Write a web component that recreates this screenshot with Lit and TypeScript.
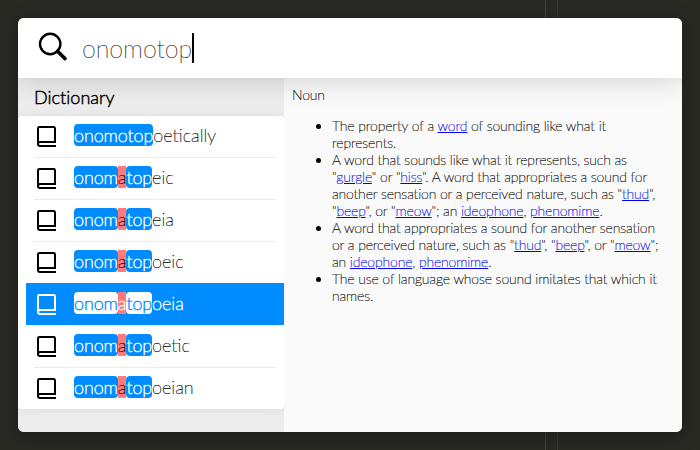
import { LitElement, html, css, svg } from "lit";
import { customElement, property } from "lit/decorators.js";
import { classMap } from "lit/directives/class-map.js";

type Part = { text: string; kind: "match" | "miss" | "rest" };

const fuzzy = (tail: string): Part[] => [
  { text: "onom", kind: "match" },
  { text: "a", kind: "miss" },
  { text: "top", kind: "match" },
  { text: tail, kind: "rest" },
];

const RESULTS: Part[][] = [
  [{ text: "onomotop", kind: "match" }, { text: "oetically", kind: "rest" }],
  fuzzy("eic"),
  fuzzy("eia"),
  fuzzy("oeic"),
  fuzzy("oeia"),
  fuzzy("oetic"),
  fuzzy("oeian"),
];

@customElement("result-row")
export class ResultRow extends LitElement {
  @property({ attribute: false }) parts: Part[] = [];
  @property({ type: Boolean, reflect: true }) selected = false;

  static styles = css`
    :host {
      display: flex;
      align-items: center;
      box-sizing: border-box;
      height: 42px;
      margin: 0 8px 0 16px;
      padding: 0 0 1px 2px;
      border-top: 1px solid #ebebeb;
      font-size: 18px;
      -webkit-text-stroke: 0.2px currentColor;
      color: #000;
    }
    :host(:first-child) {
      height: 41px;
      border-top: none;
    }
    :host([selected]) {
      margin: 0 0 0 8px;
      padding-left: 10px;
      border-top-color: #008cff;
      background: #008cff;
      color: #fff;
      -webkit-text-stroke: 0.5px currentColor;
    }
    .icon {
      width: 20px;
      height: 22px;
      margin: 0 18px 0 0;
      flex: none;
    }
    .word {
      display: flex;
      height: 22px;
      line-height: 23px;
      margin-top: -2px;
    }
    .match {
      background: #008cff;
      color: #fff;
      border-radius: 4px;
      letter-spacing: -0.06px;
      -webkit-text-stroke: 0.5px currentColor;
    }
    .miss {
      background: #ff7a7a;
    }
    :host([selected]) .match {
      background: #fff;
      color: #008cff;
    }
  `;

  render() {
    return html`
      <svg class="icon" viewBox="0 0 20 22" fill="none" stroke="currentColor" stroke-width="2">
        ${svg`<path d="M20 21H4Q2 21 2 19V3.4Q2 2 3.4 2H17.6Q19 2 19 3.4V17H4Q2 17 2 19" />`}
      </svg>
      <div class="word">
        ${this.parts.map(
          (p) => html`<span class=${classMap({ match: p.kind === "match", miss: p.kind === "miss" })}>${p.text}</span>`
        )}
      </div>
    `;
  }
}

@customElement("app-root")
export class AppRoot extends LitElement {
  static styles = css`
    :host {
      display: block;
      position: relative;
      box-sizing: border-box;
      width: 700px;
      height: 450px;
      padding: 18px;
      overflow: hidden;
      background: #282923;
      font-family: "Lato Thin", Lato, sans-serif;
      font-weight: 400;
    }
    .guide {
      position: absolute;
      top: 0;
      bottom: 0;
      left: 545px;
      width: 11px;
      border-left: 1px solid #41423d;
      border-right: 1px solid #373832;
    }
    .window {
      position: relative;
      display: flex;
      flex-direction: column;
      height: 414px;
      border-radius: 6px;
      overflow: hidden;
      background: #fafafa;
    }
    .halo {
      position: relative;
      border-radius: 6px;
      box-shadow: 0 4px 20px rgba(0, 0, 0, 0.25);
    }
    .search {
      position: relative;
      z-index: 1;
      display: flex;
      align-items: center;
      height: 60px;
      flex: none;
      background: #fff;
      box-shadow: 0 0 30px rgba(0, 0, 0, 0.2);
    }
    .lens {
      width: 30px;
      height: 30px;
      margin: -2px 14px 0 20px;
    }
    .query {
      font-size: 25px;
      line-height: 30px;
      width: 110px;
      white-space: nowrap;
      letter-spacing: -0.08px;
    }
    .caret {
      width: 2px;
      height: 30px;
      margin-top: -1px;
      background: #000;
    }
    .body {
      display: flex;
      flex: 1;
    }
    .side {
      width: 266px;
      flex: none;
      background: #ededed;
    }
    .heading {
      height: 38px;
      line-height: 39px;
      padding-left: 16px;
      font-family: "Lato Light", Lato, sans-serif;
      font-size: 18px;
      letter-spacing: 0.04px;
      -webkit-text-stroke: 0.45px #000;
    }
    .list {
      background: #fff;
      border-radius: 4px;
      box-shadow: 0 0 12px rgba(0, 0, 0, 0.08);
    }
    .detail {
      flex: 1;
      position: relative;
      background: #fafafa;
      padding: 8px 18px 0 8px;
      font-size: 14px;
      line-height: 17px;
      letter-spacing: -0.13px;
      -webkit-text-stroke: 0.2px currentColor;
      color: #000;
    }
    .kind {
      margin: 0 0 14px;
    }
    ul {
      margin: 0;
      padding-left: 40px;
    }
    a {
      color: #0000ee;
      text-decoration: underline;
    }
  `;

  private link(word: string) {
    return html`<a href="#">${word}</a>`;
  }

  render() {
    const l = this.link;
    return html`
      <div class="guide"></div>
      <div class="halo">
        <div class="window">
          <div class="search">
            <svg class="lens" viewBox="0 0 30 30" fill="none" stroke="#000">
              <circle cx="12.2" cy="12" r="10.2" stroke-width="2.4" />
              <path d="M19.5 19.2L27 26.6" stroke-width="3.6" stroke-linecap="round" />
            </svg>
            <span class="query">onomotop</span>
            <span class="caret"></span>
          </div>
          <div class="body">
            <div class="side">
              <div class="heading">Dictionary</div>
              <div class="list">
                ${RESULTS.map((parts, i) => html`<result-row .parts=${parts} ?selected=${i === 4}></result-row>`)}
              </div>
            </div>
            <div class="detail">
              <p class="kind">Noun</p>
              <ul>
                <li>The property of a ${l("word")} of sounding like what it represents.</li>
                <li>
                  A word that sounds like what it represents, such as "${l("gurgle")}" or "${l("hiss")}". A word that
                  appropriates a sound for another sensation or a perceived nature, such as "${l("thud")}",
                  "${l("beep")}", or "${l("meow")}"; an ${l("ideophone")}, ${l("phenomime")}.
                </li>
                <li>
                  A word that appropriates a sound for another sensation or a perceived nature, such as "${l("thud")}",
                  "${l("beep")}", or "${l("meow")}"; an ${l("ideophone")}, ${l("phenomime")}.
                </li>
                <li>The use of language whose sound imitates that which it names.</li>
              </ul>
            </div>
          </div>
        </div>
      </div>
    `;
  }
}
